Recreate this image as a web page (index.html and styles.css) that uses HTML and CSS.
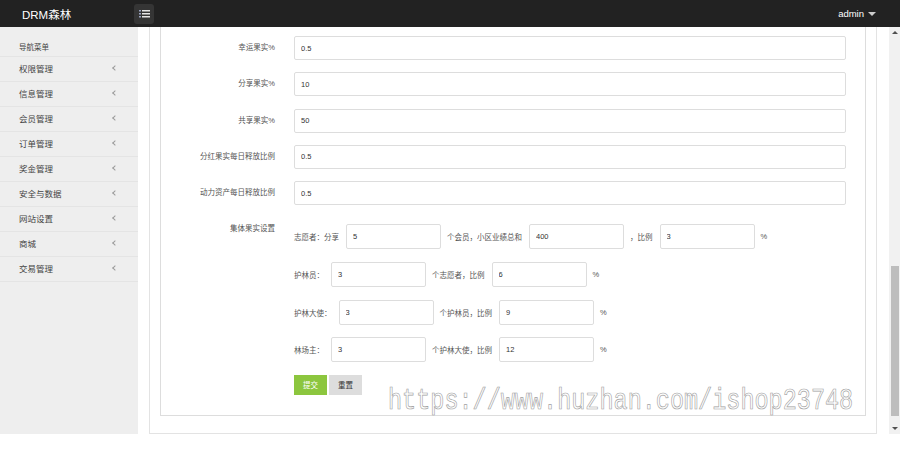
FILE: index.html
```html
<!DOCTYPE html>
<html lang="zh-CN">
<head>
  <meta charset="UTF-8">
  <title>DRM森林 - 参数设置</title>
  <link rel="stylesheet" href="styles.css">
</head>
<body>

<div class="app">
  <header class="topbar">
    <div class="brand">DRM森林</div>
    <button class="menu-toggle" type="button">
      <svg width="11" height="8" viewBox="0 0 11 8">
        <rect x="0" y="0" width="2" height="1.5" fill="#9aa3c0"/>
        <rect x="3" y="0" width="8" height="1.5" fill="#e6e6e6"/>
        <rect x="0" y="3" width="2" height="1.5" fill="#9aa3c0"/>
        <rect x="3" y="3" width="8" height="1.5" fill="#e6e6e6"/>
        <rect x="0" y="6" width="2" height="1.5" fill="#9aa3c0"/>
        <rect x="3" y="6" width="8" height="1.5" fill="#e6e6e6"/>
      </svg>
    </button>
    <div class="user">admin <span class="caret"></span></div>
  </header>

  <div class="layout">
    <aside class="sidebar">
      <div class="nav-title">导航菜单</div>
      <ul class="nav">
        <li>权限管理 <i class="arrow"></i></li>
        <li>信息管理 <i class="arrow"></i></li>
        <li>会员管理 <i class="arrow"></i></li>
        <li>订单管理 <i class="arrow"></i></li>
        <li>奖金管理 <i class="arrow"></i></li>
        <li>安全与数据 <i class="arrow"></i></li>
        <li>网站设置 <i class="arrow"></i></li>
        <li>商城 <i class="arrow"></i></li>
        <li>交易管理 <i class="arrow"></i></li>
      </ul>
    </aside>

    <main class="content">
      <div class="page">
        <div class="box">
          <div class="box-body">
            <form class="form">
              <div class="form-row">
                <label class="form-label">幸运果实%</label>
                <input class="form-control" type="text" value="0.5">
              </div>
              <div class="form-row">
                <label class="form-label">分享果实%</label>
                <input class="form-control" type="text" value="10">
              </div>
              <div class="form-row">
                <label class="form-label">共享果实%</label>
                <input class="form-control" type="text" value="50">
              </div>
              <div class="form-row">
                <label class="form-label">分红果实每日释放比例</label>
                <input class="form-control" type="text" value="0.5">
              </div>
              <div class="form-row">
                <label class="form-label">动力资产每日释放比例</label>
                <input class="form-control" type="text" value="0.5">
              </div>

              <div class="form-row group-row">
                <label class="form-label">集体果实设置</label>
                <div class="group">
                  <div class="sub-row">
                    <span>志愿者：分享</span>
                    <input class="small-input" type="text" value="5">
                    <span>个会员，小区业绩总和</span>
                    <input class="small-input" type="text" value="400">
                    <span>，比例</span>
                    <input class="small-input" type="text" value="3">
                    <span>%</span>
                  </div>
                  <div class="sub-row">
                    <span>护林员：</span>
                    <input class="small-input" type="text" value="3">
                    <span>个志愿者，比例</span>
                    <input class="small-input" type="text" value="6">
                    <span>%</span>
                  </div>
                  <div class="sub-row">
                    <span>护林大使：</span>
                    <input class="small-input" type="text" value="3">
                    <span>个护林员，比例</span>
                    <input class="small-input" type="text" value="9">
                    <span>%</span>
                  </div>
                  <div class="sub-row">
                    <span>林场主：</span>
                    <input class="small-input" type="text" value="3">
                    <span>个护林大使，比例</span>
                    <input class="small-input" type="text" value="12">
                    <span>%</span>
                  </div>
                  <div class="actions">
                    <button class="btn btn-submit" type="submit">提交</button>
                    <button class="btn btn-reset" type="reset">重置</button>
                  </div>
                </div>
              </div>
            </form>
          </div>
        </div>
      </div>

      <div class="scrollbar">
        <div class="sb-btn"><span class="sb-up"></span></div>
        <div class="sb-track"><div class="sb-thumb"></div></div>
        <div class="sb-btn"><span class="sb-down"></span></div>
      </div>
    </main>
  </div>

  <div class="watermark">https://www.huzhan.com/ishop23748</div>
</div>

</body>
</html>
```

FILE: styles.css
```css
body {
  font-family: "Liberation Sans", "Noto Sans CJK SC", sans-serif;
  margin: 0;
  padding: 0;
  background-color: #ffffff;
}
.app {
  position: relative;
  height: 434px;
  display: flex;
  flex-direction: column;
}
.topbar {
  height: 27px;
  background-color: #222222;
  color: #ffffff;
  display: flex;
  align-items: center;
}
.brand {
  width: 134px;
  box-sizing: border-box;
  padding-left: 22px;
  font-size: 11.5px;
}
.menu-toggle {
  width: 20px;
  height: 20px;
  padding: 0;
  border: none;
  border-radius: 3px;
  background-color: #353535;
  display: flex;
  align-items: center;
  justify-content: center;
}
.user {
  margin-left: auto;
  padding-right: 24px;
  font-size: 9.5px;
  display: flex;
  align-items: center;
}
.caret {
  margin-left: 4px;
  border-top: 4px solid #cccccc;
  border-left: 4px solid transparent;
  border-right: 4px solid transparent;
}
.layout {
  flex: 1;
  display: flex;
  min-height: 0;
}

/* sidebar */
.sidebar {
  width: 138px;
  background-color: #eeeeee;
  color: #444444;
}
.nav-title {
  height: 30px;
  box-sizing: border-box;
  padding: 11px 0 0 19px;
  line-height: 20px;
  font-size: 7.5px;
  border-bottom: 1px solid #e4e4e4;
}
.nav {
  list-style-type: none;
  margin: 0;
  padding: 0;
}
.nav li {
  height: 23px;
  line-height: 23px;
  padding: 1px 21px 0 19px;
  font-size: 8.5px;
  border-bottom: 1px solid #e4e4e4;
  display: flex;
  align-items: center;
  justify-content: space-between;
}
.nav .arrow {
  width: 3px;
  height: 3px;
  margin-top: -3px;
  border-left: 1px solid #9a9a9a;
  border-bottom: 1px solid #9a9a9a;
  transform: rotate(45deg);
}

/* main area */
.content {
  flex: 1;
  display: flex;
  min-width: 0;
}
.page {
  flex: 1;
  overflow: hidden;
  padding: 0 12px 0 11px;
}
.box {
  border: 1px solid #e3e3e3;
  border-top: none;
  padding: 0 10px 17px 10px;
}
.box-body {
  border: 1px solid #dddddd;
  border-top: none;
  padding: 9px 19px 20px 0;
}
.form-row {
  display: flex;
  align-items: center;
  margin-bottom: 12.3px;
}
.form-label {
  width: 114px;
  margin-right: 19px;
  text-align: right;
  font-size: 7.5px;
  line-height: 10px;
  color: #555555;
}
.form-control {
  flex: 1;
  height: 24px;
  box-sizing: border-box;
  padding: 0 6px;
  border: 1px solid #dddddd;
  border-radius: 2px;
  font-family: "Liberation Sans", sans-serif;
  font-size: 7.5px;
  color: #333333;
}
.group-row {
  align-items: flex-start;
  margin-top: 19px;
  margin-bottom: 0;
}
.group {
  flex: 1;
}
.sub-row {
  display: flex;
  align-items: center;
  height: 25px;
  margin-bottom: 12.7px;
  font-size: 7.5px;
  color: #555555;
}
.small-input {
  width: 95px;
  height: 25px;
  box-sizing: border-box;
  margin: 0 6px 0 7px;
  padding: 0 6px;
  border: 1px solid #dddddd;
  border-radius: 2px;
  font-family: "Liberation Sans", sans-serif;
  font-size: 7.5px;
  color: #333333;
}
.actions {
  display: flex;
  gap: 2px;
  margin-top: 4.3px;
}
.btn {
  width: 33px;
  height: 20px;
  padding: 0;
  border: none;
  font-family: "Noto Sans CJK SC", sans-serif;
  font-size: 7.5px;
}
.btn-submit {
  background-color: #8cc63e;
  color: #ffffff;
}
.btn-reset {
  background-color: #dddddd;
  color: #333333;
}

/* scrollbar of the content pane */
.scrollbar {
  width: 11px;
  background-color: #f1f1f1;
  display: flex;
  flex-direction: column;
}
.sb-btn {
  height: 11px;
  display: flex;
  align-items: center;
  justify-content: center;
}
.sb-up {
  border-bottom: 3px solid #505050;
  border-left: 3px solid transparent;
  border-right: 3px solid transparent;
}
.sb-down {
  border-top: 3px solid #505050;
  border-left: 3px solid transparent;
  border-right: 3px solid transparent;
}
.sb-track {
  flex: 1;
  display: flex;
  flex-direction: column;
}
.sb-thumb {
  height: 150px;
  margin: auto 1px 7px 2px;
  background-color: #bdbdbd;
}

.watermark {
  position: absolute;
  left: 388px;
  top: 387px;
  font-family: "Liberation Mono", monospace;
  font-size: 29px;
  line-height: 1;
  white-space: nowrap;
  color: #ffffff;
  -webkit-text-stroke: 0.7px #a0a0a0;
  transform: scaleX(0.81);
  transform-origin: left top;
}
```
